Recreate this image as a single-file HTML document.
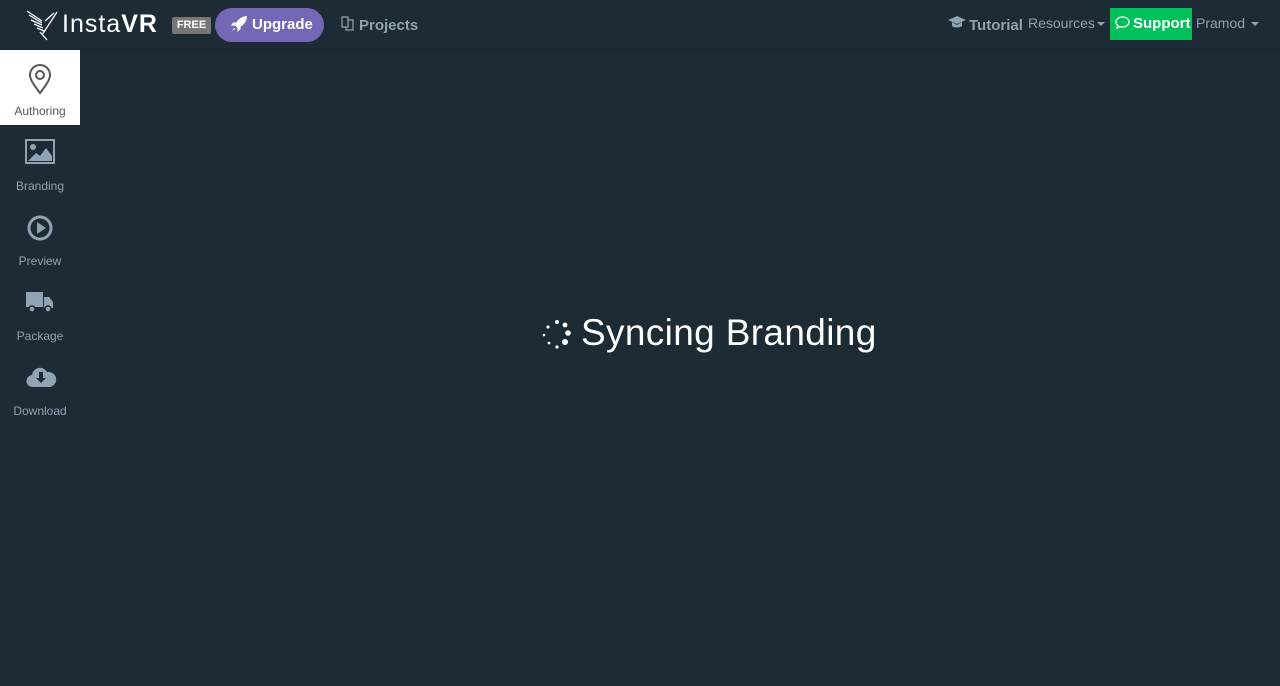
<!DOCTYPE html>
<html><head><meta charset="utf-8"><style>
*{margin:0;padding:0;box-sizing:border-box}
body{width:1280px;height:686px;background:#1d2b35;font-family:"Liberation Sans",sans-serif;position:relative;overflow:hidden;color:#8fa3b3}
.nav{position:absolute;left:0;top:0;width:1280px;height:50px;border-bottom:1px solid #1a262f}
.abs{position:absolute}
.side{position:absolute;left:0;top:50px;width:80px}
.si{height:75px;text-align:center;font-size:12px;color:#8fa3b3;position:relative}
.si svg{position:absolute;left:25px;top:13px}
.si span{position:absolute;left:0;right:0;top:54px}
.si.act{background:#fff;color:#555}
</style></head><body>
<div class="nav">
<svg class="abs" style="left:26px;top:9px" width="34" height="34" viewBox="0 0 34 34" stroke="#fff" stroke-width="1.3" fill="none">
<path d="M1 2 L16 12 M3 6 L16 14 M5 11 L16 16 M8 15 L17 19 M11 19 L18 22 M14 23 L21 31 M16 26 L31 3 M19 12 L28 4"/></svg>
<div class="abs" style="left:62px;top:10px;font-size:25px;color:#fff;letter-spacing:1px"><span style="font-weight:300">Insta</span><b>VR</b></div>
<div class="abs" style="left:172px;top:17px;width:39px;height:17px;background:#777;border-radius:2px;color:#fff;font-size:11px;font-weight:bold;text-align:center;line-height:17px">FREE</div>
<div class="abs" style="left:215px;top:8px;width:109px;height:34px;background:#7467b5;border-radius:17px;color:#fff;font-size:15px;line-height:34px;padding-left:37px;font-weight:bold">Upgrade</div>
<svg class="abs" style="left:231px;top:15px" width="17" height="17" viewBox="0 0 16 16" fill="#fff"><path d="M15 1 C10 1 7 4 5 7 L2 7 L0 10 L4 10 L6 12 L6 16 L9 13 L9 11 C12 9 15 6 15 1Z M1 15 L3 12 L4 13Z"/></svg>
<svg class="abs" style="left:341px;top:16px" width="14" height="15" viewBox="0 0 14 15" fill="none" stroke="#8fa3b3" stroke-width="1.2"><path d="M1 1h6v10H1z M7 4h5v10H5v-3"/></svg>
<div class="abs" style="left:359px;top:17px;font-size:15px;font-weight:bold">Projects</div>
<svg class="abs" style="left:948px;top:16px" width="18" height="13" viewBox="0 0 18 13" fill="#8fa3b3"><path d="M0 4L9 0L18 4L9 8Z M4 6v4c2 2 8 2 10 0V6L9 9Z"/></svg>
<div class="abs" style="left:969px;top:17px;font-size:15px;font-weight:bold">Tutorial</div>
<div class="abs" style="left:1028px;top:15px;font-size:14px">Resources</div>
<div class="abs" style="left:1097px;top:22px;border:4px solid transparent;border-top-color:#8fa3b3;border-bottom:0"></div>
<div class="abs" style="left:1110px;top:8px;width:82px;height:32px;background:#00c05b;color:#fff;font-size:15px;font-weight:bold;line-height:32px;padding-left:23px">Support</div>
<svg class="abs" style="left:1115px;top:16px" width="15" height="14" viewBox="0 0 15 14" fill="none" stroke="#fff" stroke-width="1.3"><path d="M7.5 1C11 1 14 3 14 6S11 11 7.5 11C6.5 11 5.5 11 5 10.5L2 12L3 9.5C1.5 8.5 1 7.3 1 6C1 3 4 1 7.5 1Z"/></svg>
<div class="abs" style="left:1196px;top:15px;font-size:14px">Pramod</div>
<div class="abs" style="left:1251px;top:22px;border:4px solid transparent;border-top-color:#8fa3b3;border-bottom:0"></div>
</div>
<div class="side">
<div class="si act"><svg width="30" height="32" viewBox="0 0 30 32" fill="none" stroke="#555" stroke-width="2"><path d="M15 30C9 22 5 17 5 12A10 10 0 0 1 25 12C25 17 21 22 15 30Z"/><circle cx="15" cy="12" r="4"/></svg><span>Authoring</span></div>
<div class="si"><svg width="30" height="28" viewBox="0 0 30 28"><rect x="1" y="2" width="28" height="23" fill="none" stroke="#8fa3b3" stroke-width="2"/><circle cx="8" cy="9" r="3" fill="#8fa3b3"/><path d="M3 23L11 15L15 18L21 10L27 18V23Z" fill="#8fa3b3"/></svg><span>Branding</span></div>
<div class="si"><svg width="30" height="30" viewBox="0 0 30 30"><circle cx="15" cy="15" r="11" fill="none" stroke="#8fa3b3" stroke-width="3"/><path d="M12 9L21 15L12 21Z" fill="#8fa3b3"/></svg><span>Preview</span></div>
<div class="si"><svg width="30" height="28" viewBox="0 0 30 28" fill="#8fa3b3"><path d="M1 4h17v15H1Z M19 9h5l4 5v6H19Z"/><circle cx="7" cy="21" r="3" stroke="#1d2b35" stroke-width="1.5"/><circle cx="23" cy="21" r="3" stroke="#1d2b35" stroke-width="1.5"/></svg><span>Package</span></div>
<div class="si"><svg width="32" height="28" viewBox="0 0 32 28"><path d="M8 24A6 6 0 0 1 7 12A8 8 0 0 1 22 9A7 7 0 0 1 25 24Z" fill="#8fa3b3"/><path d="M14 9h4v6h3l-5 5l-5-5h3Z" fill="#1d2b35"/></svg><span>Download</span></div>
</div>
<svg class="abs" style="left:540px;top:318px" width="34" height="34" viewBox="0 0 34 34" fill="#fff">
<circle cx="17" cy="4" r="2"/><circle cx="25" cy="7" r="2.4"/><circle cx="28" cy="15" r="2.8"/><circle cx="25" cy="24" r="3"/><circle cx="17" cy="29" r="1.6"/><circle cx="9" cy="25" r="1.4"/><circle cx="4" cy="17" r="1.3"/><circle cx="8" cy="9" r="1.6"/></svg>
<div class="abs" style="left:581px;top:312px;font-size:37px;color:#fff;letter-spacing:0.35px">Syncing Branding</div>
</body></html>
